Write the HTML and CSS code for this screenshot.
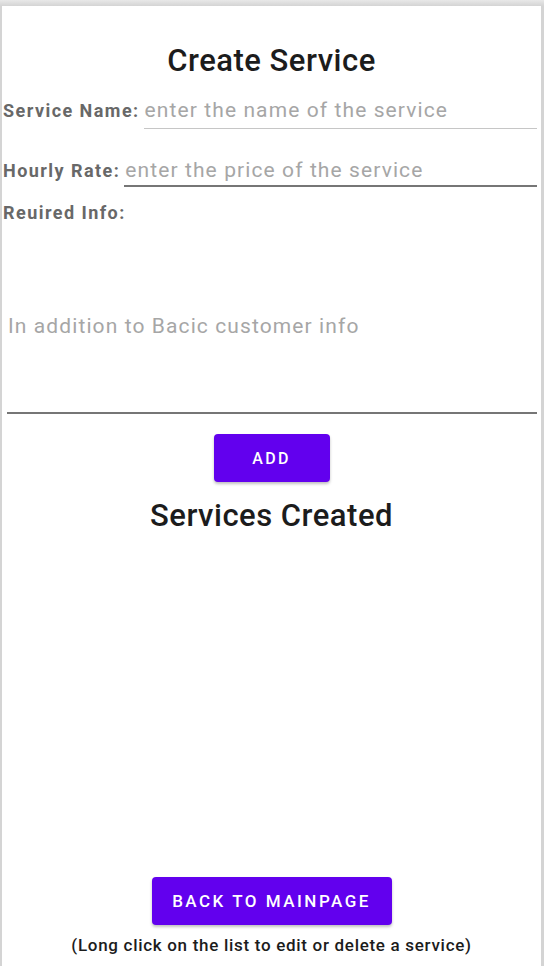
FILE: index.html
```html
<!DOCTYPE html>
<html>
<head>
<meta charset="utf-8">
<link rel="stylesheet" href="styles.css">
</head>
<body>
<div class="frame">
  <div class="screen">
    <h1 class="title">Create Service</h1>
    <div class="row row-name">
      <span class="label">Service Name:</span>
      <div class="field field-light"><span class="ph">enter the name of the service</span></div>
    </div>
    <div class="row row-rate">
      <span class="label">Hourly Rate:</span>
      <div class="field field-dark"><span class="ph">enter the price of the service</span></div>
    </div>
    <div class="label info-label">Reuired Info:</div>
    <div class="area"><span class="ph">In addition to Bacic customer info</span></div>
    <div class="center"><button class="btn btn-add">ADD</button></div>
    <h2 class="title title-2">Services Created</h2>
    <div class="list"></div>
    <div class="center"><button class="btn btn-back">BACK TO MAINPAGE</button></div>
    <p class="hint">(Long click on the list to edit or delete a service)</p>
  </div>
</div>
</body>
</html>
```

FILE: styles.css
```css
html, body {
  margin: 0;
  padding: 0;
  background: #d6d6d6;
}
body {
  font-family: Roboto, "Noto Sans", sans-serif;
}
.frame {
  width: 544px;
  height: 966px;
  box-sizing: border-box;
  padding: 6px 3px 0 2px;
  background: linear-gradient(#e8e8e8, #d4d4d4 6px);
  overflow: hidden;
}
.screen {
  background: #fff;
  height: 960px;
  display: flex;
  flex-direction: column;
}
.title {
  margin: 0;
  padding-top: 37px;
  text-align: center;
  font-size: 31px;
  line-height: 36px;
  font-weight: 500;
  letter-spacing: 0.5px;
  color: #1c1c1c;
}
.row {
  display: flex;
  align-items: baseline;
  padding-left: 1px;
}
.row-name { margin-top: 19px; }
.row-rate { margin-top: 29px; }
.label {
  font-size: 18px;
  font-weight: 700;
  color: #686868;
  line-height: 20px;
  letter-spacing: 1.45px;
}
.field {
  flex: 1;
  margin-left: 4px;
  margin-right: 4px;
}
.field-light { border-bottom: 1px solid #c6c6c6; padding-bottom: 6px; }
.field-dark { border-bottom: 2px solid #767676; padding-bottom: 3px; }
.ph {
  display: block;
  padding-left: 1px;
  font-size: 21px;
  line-height: 24px;
  letter-spacing: 1.1px;
  color: #a6a6a6;
}
.info-label {
  margin-top: 16px;
  padding-left: 1px;
}
.area {
  margin: 0 4px 0 5px;
  height: 191px;
  box-sizing: border-box;
  border-bottom: 2px solid #767676;
  padding-top: 91px;
}
.center {
  display: flex;
  justify-content: center;
}
.btn {
  border: none;
  background: #6200ee;
  color: #fff;
  font-family: Roboto, "Noto Sans", sans-serif;
  font-weight: 500;
  border-radius: 4px;
  box-shadow: 0 2px 3px rgba(0,0,0,0.25);
  padding: 0;
}
.btn-add {
  margin-top: 20px;
  width: 116px;
  height: 48px;
  font-size: 16px;
  letter-spacing: 2.4px;
}
.title-2 {
  padding-top: 16px;
}
.list { flex: 1; }
.btn-back {
  width: 240px;
  height: 48px;
  font-size: 17px;
  letter-spacing: 2.5px;
}
.hint {
  margin: 10px 0 11px;
  text-align: center;
  font-size: 17px;
  line-height: 20px;
  font-weight: 500;
  letter-spacing: 0.7px;
  color: #1c1c1c;
}
```
